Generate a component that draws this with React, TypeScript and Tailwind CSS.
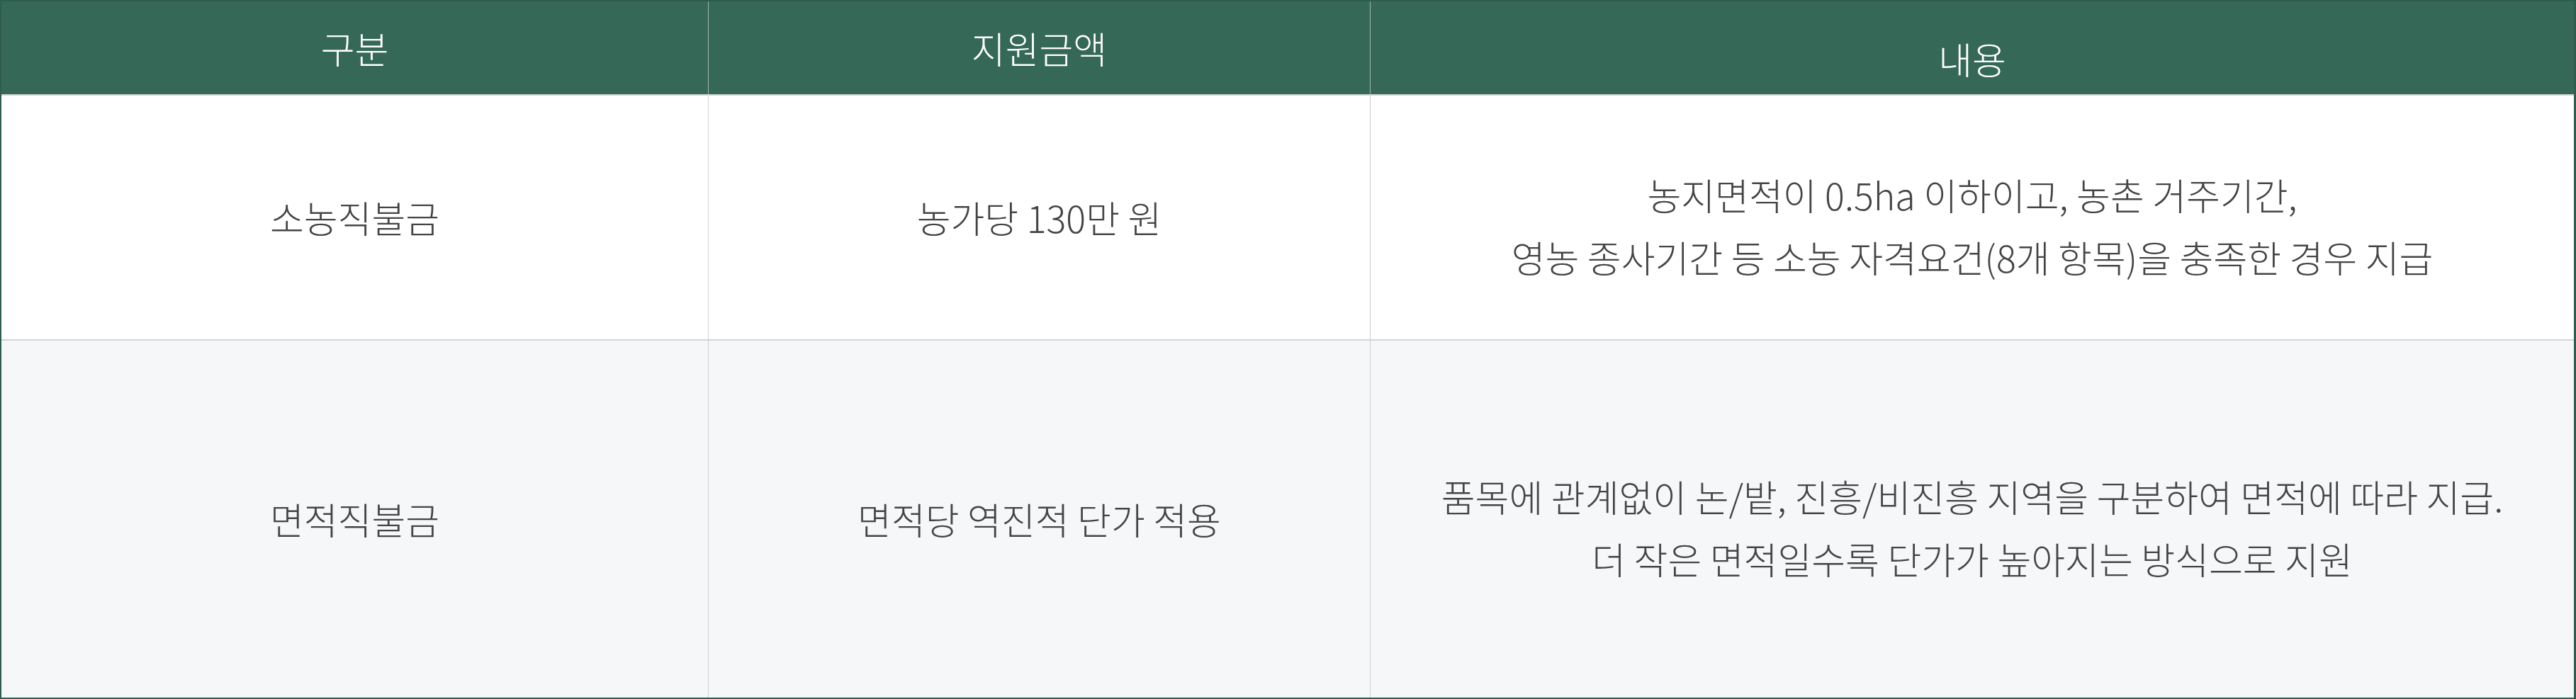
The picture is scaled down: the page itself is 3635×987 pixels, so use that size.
import React from "react";

type Row = {
  label: string;
  amount: string;
  lines: string[];
  shade: boolean;
  height: string;
};

const rows: Row[] = [
  {
    label: "소농직불금",
    amount: "농가당 130만 원",
    lines: [
      "농지면적이 0.5ha 이하이고, 농촌 거주기간,",
      "영농 종사기간 등 소농 자격요건(8개 항목)을 충족한 경우 지급",
    ],
    shade: false,
    height: "h-[346px]",
  },
  {
    label: "면적직불금",
    amount: "면적당 역진적 단가 적용",
    lines: [
      "품목에 관계없이 논/밭, 진흥/비진흥 지역을 구분하여 면적에 따라 지급.",
      "더 작은 면적일수록 단가가 높아지는 방식으로 지원",
    ],
    shade: true,
    height: "h-[504px]",
  },
];

const font = "font-['Noto_Sans_CJK_KR','Noto_Sans',sans-serif]";

export default function App() {
  return (
    <div className={`w-[3635px] bg-white font-light ${font}`}>
      <div className="border-2 border-[#2f5c4e] border-r-[3px]">
        {/* Header */}
        <div className="grid grid-cols-[998px_934px_1fr] h-[133px] bg-[#356856] text-white text-[52px] border-b-2 border-[#cfd3d1]">
          <div className="flex items-center justify-center border-r border-[#9fb5ad]">
            구분
          </div>
          <div className="flex items-center justify-center border-r border-[#9fb5ad]">
            지원금액
          </div>
          <div className="flex items-center justify-center pt-[30px]">내용</div>
        </div>

        {/* Body */}
        {rows.map((r, i) => (
          <div
            key={i}
            className={`grid grid-cols-[998px_934px_1fr] ${r.height} text-[52px] text-[#444444] ${
              r.shade ? "bg-[#f6f7f9]" : "bg-white"
            } ${i < rows.length - 1 ? "border-b-2 border-[#d3d3d3]" : ""}`}
          >
            <div className="flex items-center justify-center border-r border-[#d0d0d0]">
              {r.label}
            </div>
            <div className="flex items-center justify-center border-r border-[#d0d0d0]">
              {r.amount}
            </div>
            <div className="flex flex-col items-center justify-center pt-[24px] leading-[88px]">
              {r.lines.map((l, j) => (
                <div key={j}>{l}</div>
              ))}
            </div>
          </div>
        ))}
      </div>
    </div>
  );
}
